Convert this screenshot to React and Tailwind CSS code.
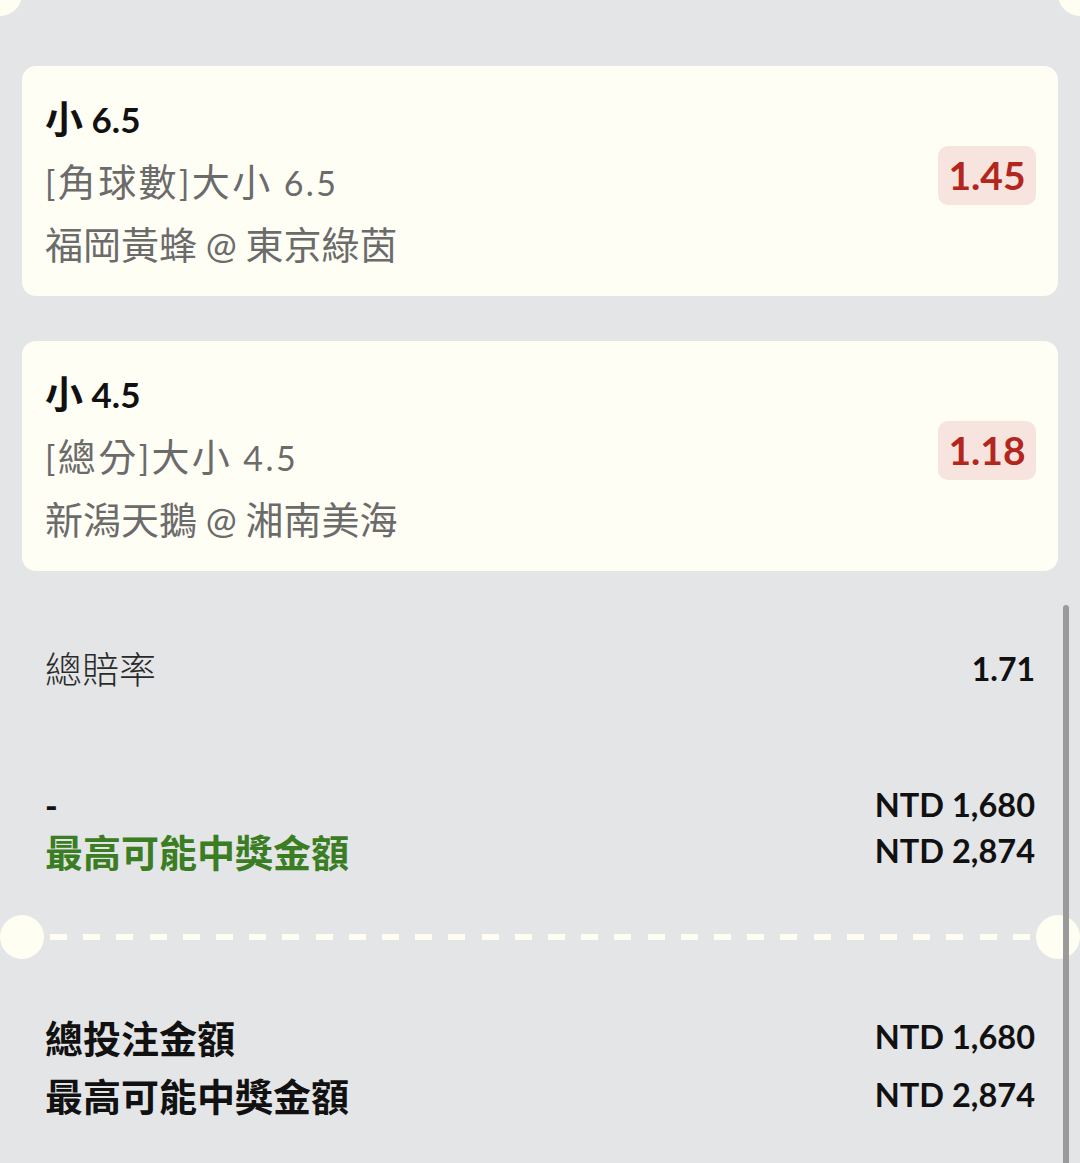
import React from "react";

const C = "font-['Noto_Sans_CJK_TC',sans-serif] text-[38px]";

function Card({ title, cjkMarket, line, home, away, odds }) {
  return (
    <div className="flex h-[230px] items-center justify-between rounded-[14px] bg-[#fffef5] pl-[23px] pr-[22px] pb-[3px]">
      <div className="flex flex-col">
        <div className="h-[63px] leading-[63px] font-bold text-[#111111] text-[35px] whitespace-nowrap">
          <span className={C}>{title}</span> {line}
        </div>
        <div className="h-[63px] leading-[63px] text-[#6b6b6b] text-[34px] tracking-[2.4px] whitespace-nowrap">
          [<span className={C}>{cjkMarket}</span>]<span className={C}>大小</span> {line}
        </div>
        <div className="h-[63px] leading-[63px] text-[#6b6b6b] text-[34px] whitespace-nowrap">
          <span className={C}>{home}</span> <span className="text-[37px]">@</span> <span className={C}>{away}</span>
        </div>
      </div>
      <div className="mb-[8px] flex h-[59px] w-[98px] items-center justify-center rounded-[10px] bg-[#f7e4df] text-[39px] font-bold text-[#b3261e]">
        {odds}
      </div>
    </div>
  );
}

export default function App() {
  const dashes = Array.from({ length: 30 });
  return (
    <div className="relative min-h-[1163px] overflow-hidden bg-[#e4e5e7] font-['Lato','Noto_Sans_CJK_TC',sans-serif]">
      <div className="absolute left-[-22px] top-[-28px] h-[44px] w-[44px] rounded-full bg-[#fffef3]" />
      <div className="absolute right-[-22px] top-[-28px] h-[44px] w-[44px] rounded-full bg-[#fffef3]" />

      <div className="flex flex-col gap-[45px] px-[22px] pt-[66px]">
        <Card title="小" line="6.5" cjkMarket="角球數" home="福岡黃蜂" away="東京綠茵" odds="1.45" />
        <Card title="小" line="4.5" cjkMarket="總分" home="新潟天鵝" away="湘南美海" odds="1.18" />
      </div>

      <div className="mt-[66px] flex h-[63px] items-center justify-between px-[45px]">
        <span className="font-['Noto_Sans_CJK_TC',sans-serif] text-[37px] font-light text-[#2a2a2a]">總賠率</span>
        <span className="text-[32px] font-bold text-[#111111]">1.71</span>
      </div>

      <div className="mt-[82px] flex justify-between px-[45px]">
        <div className="flex flex-col">
          <span className="h-[46px] leading-[46px] text-[34px] font-black text-[#111111]">-</span>
          <span className="h-[46px] leading-[46px] font-['Noto_Sans_CJK_TC',sans-serif] text-[38px] font-bold text-[#3b7d23]">最高可能中獎金額</span>
        </div>
        <div className="flex flex-col items-end text-[32.5px] font-bold text-[#111111]">
          <span className="h-[46px] leading-[46px]">NTD 1,680</span>
          <span className="h-[46px] leading-[46px]">NTD 2,874</span>
        </div>
      </div>

      <div className="mt-[41px] flex h-[44px] items-center">
        <div className="h-[44px] w-[44px] shrink-0 rounded-full bg-[#fffef3]" />
        <div className="mx-[6px] flex flex-1 justify-between">
          {dashes.map((_, i) => (
            <div key={i} className="h-[6px] w-[17px] bg-[#fffef3]" />
          ))}
        </div>
        <div className="h-[44px] w-[44px] shrink-0 rounded-full bg-[#fffef3]" />
      </div>

      <div className="mt-[49px] flex justify-between px-[45px]">
        <div className="flex flex-col font-['Noto_Sans_CJK_TC',sans-serif] text-[38px] font-bold text-[#111111]">
          <span className="h-[58px] leading-[58px]">總投注金額</span>
          <span className="h-[58px] leading-[58px]">最高可能中獎金額</span>
        </div>
        <div className="flex flex-col items-end text-[32.5px] font-bold text-[#111111]">
          <span className="h-[58px] leading-[58px]">NTD 1,680</span>
          <span className="h-[58px] leading-[58px]">NTD 2,874</span>
        </div>
      </div>

      <div className="absolute right-[11px] top-[605px] bottom-0 w-[6px] rounded-t-full bg-[#9a9a9a]" />
    </div>
  );
}
